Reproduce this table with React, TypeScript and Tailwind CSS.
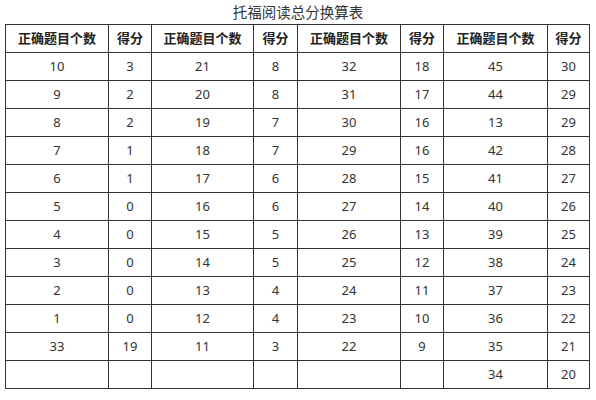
const widths = [103, 43, 102, 44, 103, 43, 104, 42];

const rows: string[][] = [
  ['10', '3', '21', '8', '32', '18', '45', '30'],
  ['9', '2', '20', '8', '31', '17', '44', '29'],
  ['8', '2', '19', '7', '30', '16', '13', '29'],
  ['7', '1', '18', '7', '29', '16', '42', '28'],
  ['6', '1', '17', '6', '28', '15', '41', '27'],
  ['5', '0', '16', '6', '27', '14', '40', '26'],
  ['4', '0', '15', '5', '26', '13', '39', '25'],
  ['3', '0', '14', '5', '25', '12', '38', '24'],
  ['2', '0', '13', '4', '24', '11', '37', '23'],
  ['1', '0', '12', '4', '23', '10', '36', '22'],
  ['33', '19', '11', '3', '22', '9', '35', '21'],
  ['', '', '', '', '', '', '34', '20'],
];

const headers = ['正确题目个数', '得分', '正确题目个数', '得分', '正确题目个数', '得分', '正确题目个数', '得分'];

export default function App() {
  return (
    <div
      className="h-[400px] w-[596px] bg-white text-[#333]"
      style={{ fontFamily: '"Noto Sans", "Noto Sans CJK SC", sans-serif' }}
    >
      <div className="flex h-[24px] items-center justify-center text-[14.5px] leading-none text-[#333]">
        托福阅读总分换算表
      </div>
      <table className="ml-[5px] table-fixed border-collapse text-[13px]">
        <colgroup>
          {widths.map((w, i) => (
            <col key={i} style={{ width: w }} />
          ))}
        </colgroup>
        <thead>
          <tr className="h-[28px]">
            {headers.map((h, i) => (
              <th key={i} className="border border-[#333] p-0 text-center font-bold text-[#222]">
                {h}
              </th>
            ))}
          </tr>
        </thead>
        <tbody>
          {rows.map((r, ri) => (
            <tr key={ri} className="h-[28px]">
              {r.map((c, ci) => (
                <td key={ci} className="border border-[#333] p-0 text-center">
                  {c}
                </td>
              ))}
            </tr>
          ))}
        </tbody>
      </table>
    </div>
  );
}
